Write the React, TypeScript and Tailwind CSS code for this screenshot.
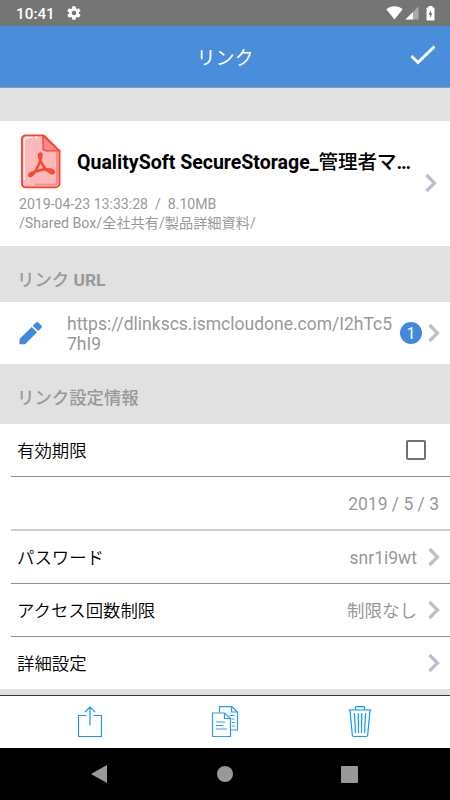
import React from 'react'

const Chevron = ({ className = '' }: { className?: string }) => (
  <svg
    viewBox="0 0 12 20"
    className={`w-3 h-5 shrink-0 ${className}`}
    fill="none"
    stroke="#bcc0cb"
    strokeWidth="3.2"
  >
    <path d="M1.5 2 9.5 10l-8 8" />
  </svg>
)

const StatusBar = () => (
  <div className="h-[26px] shrink-0 bg-[#757575] flex items-center pl-4 pr-[15px] text-white">
    <p className="w-[50px] text-[15.3px] leading-[26px] font-medium pt-[2px]">10:41</p>
    <svg viewBox="0 0 24 24" className="w-4 h-4" fill="#fff">
      <path d="M19.4 13a7.8 7.8 0 0 0 0-2l2.1-1.6c.2-.2.3-.4.1-.7l-2-3.4c-.1-.2-.4-.3-.6-.2l-2.5 1a7.3 7.3 0 0 0-1.7-1l-.4-2.6c0-.3-.2-.5-.5-.5h-4c-.3 0-.5.2-.5.4L9 5.1a8 8 0 0 0-1.7 1l-2.5-1c-.2-.1-.5 0-.6.2l-2 3.4c-.1.2-.1.5.1.7L4.5 11a8 8 0 0 0 0 2l-2.2 1.6c-.2.2-.3.4-.1.7l2 3.4c.1.2.4.3.6.2l2.5-1c.5.4 1.1.7 1.7 1l.4 2.6c0 .3.2.5.5.5h4c.3 0 .5-.2.5-.4l.4-2.7c.6-.3 1.2-.6 1.7-1l2.5 1c.2.1.5 0 .6-.2l2-3.4c.1-.2.1-.5-.1-.7zM12 15.500a3.500 3.500 0 1 1 0-7 3.500 3.500 0 0 1 0 7z" />
    </svg>
    <div className="ml-auto flex items-center">
      <svg viewBox="0 0 17 14" className="w-[17px] h-[14px]" fill="#fff">
        <path d="M8.5 13.5.3 3.2C2.5 1.3 5.4.3 8.5.3s6 1 8.2 2.9z" />
      </svg>
      <svg viewBox="0 0 14 14" className="w-[14px] h-[14px] ml-[2px]">
        <path d="M.5 13.5 13.5.5v13z" fill="#a9a9a9" />
        <path d="M.5 13.5 8 6v7.5z" fill="#fff" />
      </svg>
      <svg viewBox="0 0 9 15" className="w-[9px] h-[15px] ml-[7px]">
        <path d="M2.5 1.5V0h4v1.5h1.3c.4 0 .7.3.7.7v11.6c0 .4-.3.7-.7.7H1.2c-.4 0-.7-.3-.7-.7V2.2c0-.4.3-.7.7-.7z" fill="#fff" />
        <path d="M5.2 4 2.5 8.5h1.7L3.8 12l2.7-4.7H4.8z" fill="#666" />
      </svg>
    </div>
  </div>
)

const PdfIcon = () => (
  <svg viewBox="0 0 41 56" className="w-[40px] h-[55px] shrink-0" fill="none">
    <path d="M4.5 1.2h19L39.5 17v33.500a4 4 0 0 1-4 4h-31a3.500 3.500 0 0 1-3.500-3.500V4.700a3.500 3.500 0 0 1 3.500-3.500z" fill="#fbb9b9" />
    <path d="M3.2 47V8c0-3 1.300-4.600 4.500-4.600H12M14.500 3.400h3" stroke="#fff" strokeWidth="1.3" />
    <path d="M14 51.700h20c2 0 2.800-1 2.800-3V18" stroke="#f28b8b" strokeWidth="2" />
    <path d="M22.500 1.500v12c0 2.300 1.200 3.500 3.500 3.500h13z" fill="#f28b8b" stroke="#ff4226" strokeWidth="1.3" />
    <path d="M4.500 1.200h18.800L39.500 17v33.500a4 4 0 0 1-4 4h-31A3.500 3.500 0 0 1 1 51V4.700a3.500 3.500 0 0 1 3.500-3.500z" stroke="#ff4226" strokeWidth="1.9" />
    <path
      d="M20.200 19.800c-2.200 0-2 3-.9 5.700 2.200 6 6 11.300 11 14 2.500 1.300 4.200-.3 3-1.700-2.300-2.300-9.800-2-15.700-.4-5 1.300-9.700 3.300-9.200 4.900.6 1.500 3.500 0 5.900-3.800 2.800-4.600 5.500-10 6.400-15 .4-2.100.3-3.500-.5-3.700z"
      stroke="#f54a37"
      strokeWidth="2.7"
      strokeLinejoin="round"
    />
  </svg>
)

const ShareIcon = () => (
  <svg viewBox="0 0 24 32" className="w-6 h-8" fill="none" stroke="#1296fb" strokeWidth="1.2">
    <path d="M8.5 9.5h-8v21h23v-21h-8M12 19.500V1M7 6l5-5 5 5" />
  </svg>
)

const CopyIcon = () => (
  <svg viewBox="0 0 28 32" className="w-7 h-8" fill="none" stroke="#2c9cf8" strokeWidth="1.2">
    <path d="M8.500 6.500V.7h12.300l5.700 5.300v18H20" />
    <path d="M20.500.7V6h6M18.500 9.500h5M20.500 13h3M21 16.500h3M21 20h3" />
    <path d="M1.500 7h12l6 5.500v18h-18z" />
    <path d="M13.500 7v5.500h6M5 16h9M5 19.500h7M5 23h11" />
  </svg>
)

const TrashIcon = () => (
  <svg viewBox="0 0 24 32" className="w-6 h-8" fill="none" stroke="#1296fb" strokeWidth="1.2">
    <path d="M.5 4h23M7.500 4V1.500c0-.5.3-.8.8-.8h7.400c.5 0 .8.3.8.8V4M2 4l2.300 25c.1 1 .6 1.500 1.500 1.500h12.400c.9 0 1.400-.5 1.500-1.500L22 4" />
    <path d="m6.500 7 1 20M10.200 7l.3 20M13.800 7l-.3 20M17.500 7l-1 20" />
  </svg>
)

const SectionTitle = ({ children }: { children: React.ReactNode }) => (
  <h2 className="pl-[17px] text-[17.4px] leading-[24px] font-medium text-[#999]">{children}</h2>
)

const rows = [
  { label: 'パスワード', value: 'snr1i9wt' },
  { label: 'アクセス回数制限', value: '制限なし' },
  { label: '詳細設定', value: '' },
]

export default function App() {
  return (
    <div className="w-[450px] h-[800px] flex flex-col overflow-hidden bg-[#e1e1e1] font-[Roboto,'Noto_Sans_CJK_JP',sans-serif]">
      <StatusBar />

      <header className="h-[62px] shrink-0 bg-[#4a8edb] border-b border-[#999] grid grid-cols-[1fr_auto_1fr] items-center pr-[14px] text-white">
        <h1 className="col-start-2 pl-[14px] pt-[4px] text-[19px] leading-6">リンク</h1>
        <svg viewBox="0 0 26 20" className="w-[26px] h-5 mb-[3px] justify-self-end" fill="none" stroke="#fff" strokeWidth="3">
          <path d="m1.5 11 6.5 6.5L24.5 1.5" />
        </svg>
      </header>

      <section className="mt-[33px] h-[125px] shrink-0 bg-white flex items-center pr-[13px]">
        <div className="flex-1 min-w-0 h-full pt-[13px]">
          <div className="flex items-center pl-[21px]">
            <PdfIcon />
            <p className="ml-4 pt-[2px] text-[19.55px] leading-7 font-bold text-black whitespace-nowrap">
              QualitySoft SecureStorage_<span className="font-medium">管理者マ</span>…
            </p>
          </div>
          <div className="pl-[19px] pt-[6px] text-[14.1px] leading-[19px] text-[#999]">
            <p className="whitespace-pre">2019-04-23 13:33:28  /  8.10MB</p>
            <p className="text-[14.2px]">/Shared Box/全社共有/製品詳細資料/</p>
          </div>
        </div>
        <Chevron className="mb-[2px]" />
      </section>

      <div className="h-[56px] shrink-0 pt-[22px]">
        <SectionTitle>リンク <span className="font-bold">URL</span></SectionTitle>
      </div>
      <section className="h-[62px] shrink-0 bg-white flex items-center pl-[19px] pr-[10px]">
        <svg viewBox="0 0 24 24" className="w-6 h-6 shrink-0" fill="#4189dc">
          <path d="M.5 18v5.300H6L18 11.200l-5.300-5.300zM13.800 4.800l5.300 5.300 3.200-3.200c.8-.8.8-1.700 0-2.500l-2.800-2.800c-.8-.8-1.700-.8-2.500 0z" />
        </svg>
        <p className="ml-6 pt-[2px] w-[333px] text-[17.5px] leading-[20.5px] text-[#999]">
          https://dlinkscs.ismcloudone.com/I2hTc5<br />7hI9
        </p>
        <span className="w-[22px] h-[22px] shrink-0 rounded-full bg-[#4189dc] text-white text-[16px] leading-[24px] text-center">1</span>
        <Chevron className="ml-[6px]" />
      </section>

      <div className="h-[60px] shrink-0 pt-[22px]">
        <SectionTitle>リンク設定情報</SectionTitle>
      </div>
      <section className="shrink-0 bg-white pl-[11px] text-[17.4px] text-black">
        <div className="h-[53px] border-b border-[#8f8f8f] flex items-center justify-between pl-[6px] pr-6">
          <p className="pt-[3px] font-[350]">有効期限</p>
          <span className="w-5 h-5 border-2 border-[#707070] rounded-[2px]" />
        </div>
        <div className="h-[54px] border-b-2 border-[#cfcfcf] flex items-center justify-end pt-[3px] pr-[11px] text-[17.5px] text-[#999]">2019 / 5 / 3</div>
        {rows.map(({ label, value }) => (
          <div key={label} className="h-[53px] last:h-[52px] border-b border-[#929292] last:border-0 flex items-center pl-[6px] pr-[10px]">
            <p className="pt-[3px] font-[350]">{label}</p>
            <p className="ml-auto mr-[11px] pt-[2px] text-[17.5px] text-[#999]">{value}</p>
            <Chevron />
          </div>
        ))}
      </section>

      <div className="mt-auto h-[53px] shrink-0 bg-white border-t border-[#333] grid grid-cols-3 items-center px-[22px] justify-items-center">
        <ShareIcon />
        <CopyIcon />
        <TrashIcon />
      </div>
      <nav className="h-[52px] shrink-0 bg-black flex items-center justify-between pl-[91px] pr-[92px]">
        <svg viewBox="0 0 16 18" className="w-4 h-[18px]" fill="#999">
          <path d="M16 0v18L0 9z" />
        </svg>
        <span className="w-4 h-4 ml-[1px] rounded-full bg-[#999]" />
        <span className="w-[17px] h-[17px] rounded-[1px] bg-[#999]" />
      </nav>
    </div>
  )
}
